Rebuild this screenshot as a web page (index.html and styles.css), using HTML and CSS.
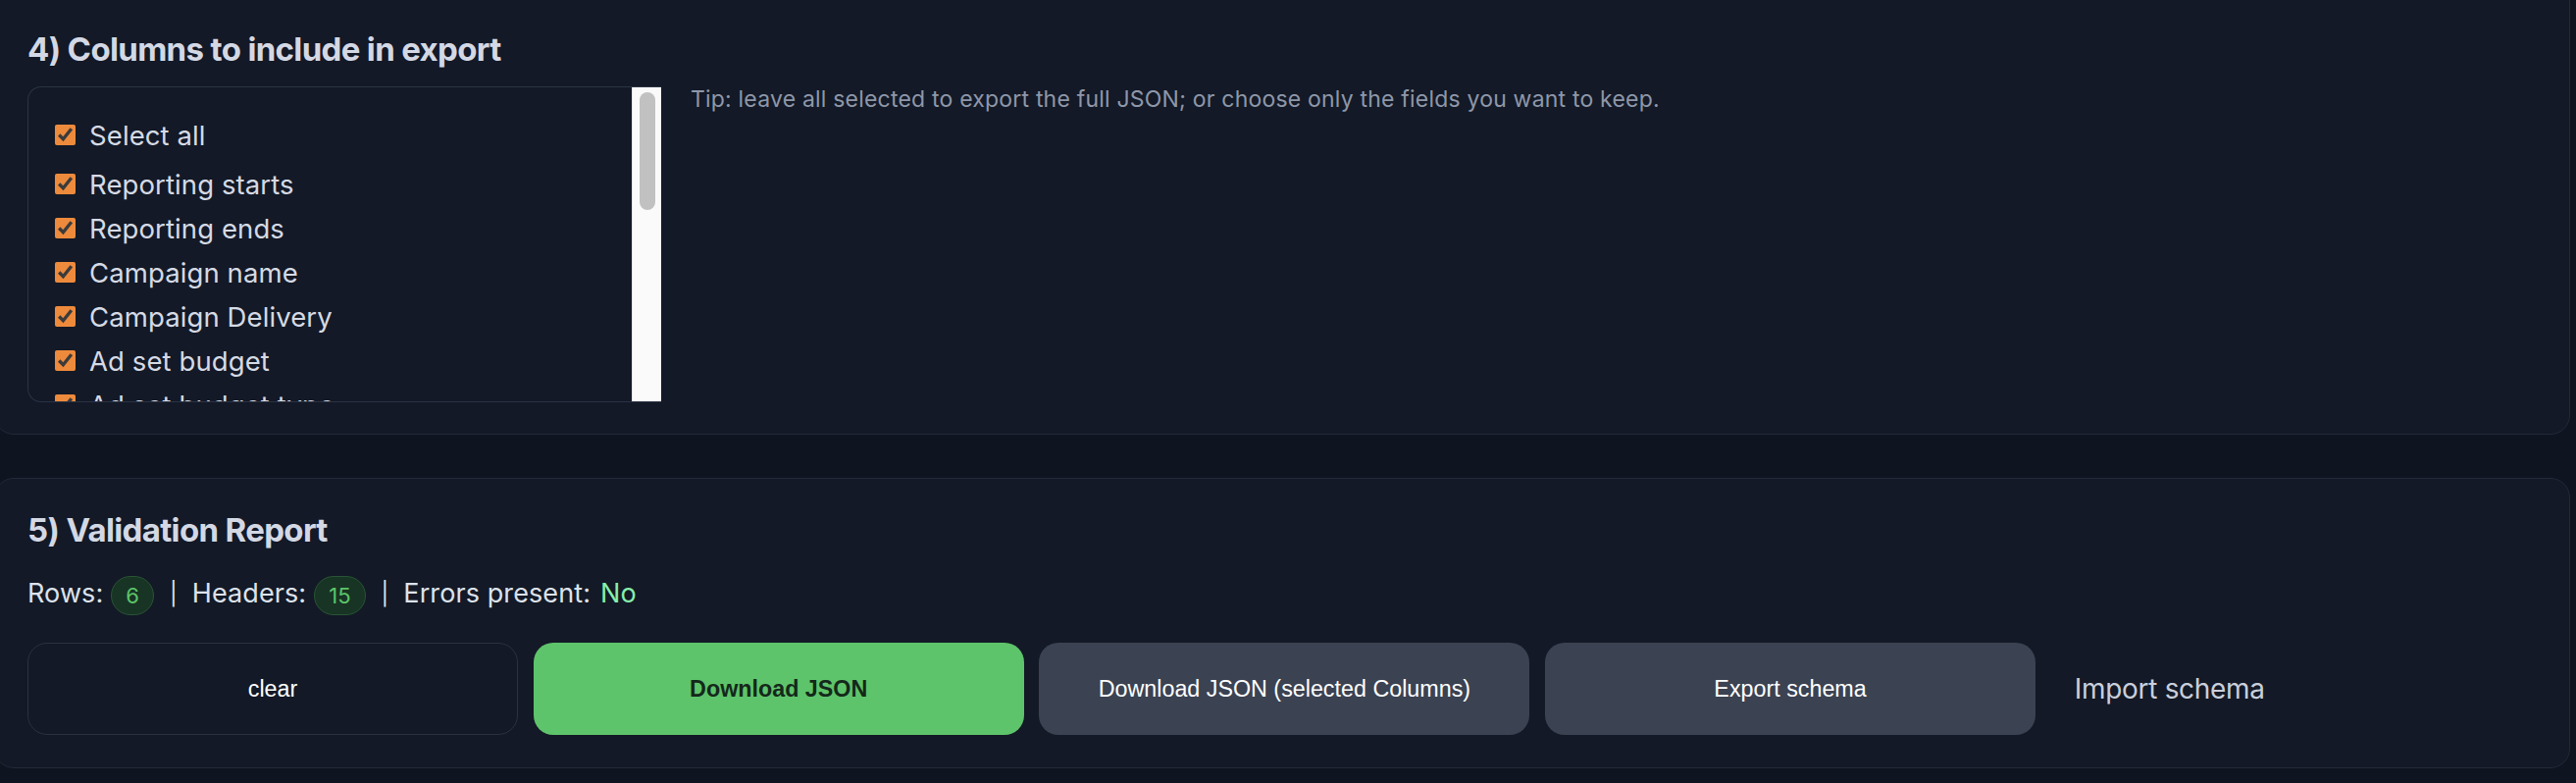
FILE: index.html
```html
<!DOCTYPE html>
<html lang="en">
<head>
<meta charset="utf-8">
<title>Export</title>
<link rel="stylesheet" href="styles.css">
</head>
<body>
<section class="card card-columns">
  <h2 class="card-title">4) Columns to include in export</h2>
  <div class="columns-row">
    <div class="list-box">
      <div class="column-list">
        <label class="col-item col-all"><input type="checkbox" checked><span>Select all</span></label>
        <label class="col-item"><input type="checkbox" checked><span>Reporting starts</span></label>
        <label class="col-item"><input type="checkbox" checked><span>Reporting ends</span></label>
        <label class="col-item"><input type="checkbox" checked><span>Campaign name</span></label>
        <label class="col-item"><input type="checkbox" checked><span>Campaign Delivery</span></label>
        <label class="col-item"><input type="checkbox" checked><span>Ad set budget</span></label>
        <label class="col-item"><input type="checkbox" checked><span>Ad set budget type</span></label>
        <label class="col-item"><input type="checkbox" checked><span>Amount spent (USD)</span></label>
        <label class="col-item"><input type="checkbox" checked><span>Attribution setting</span></label>
        <label class="col-item"><input type="checkbox" checked><span>Results</span></label>
        <label class="col-item"><input type="checkbox" checked><span>Result indicator</span></label>
        <label class="col-item"><input type="checkbox" checked><span>Reach</span></label>
        <label class="col-item"><input type="checkbox" checked><span>Impressions</span></label>
        <label class="col-item"><input type="checkbox" checked><span>Cost per results</span></label>
        <label class="col-item"><input type="checkbox" checked><span>Ends</span></label>
      </div>
      <div class="scrollbar"><div class="scroll-thumb"></div></div>
    </div>
    <p class="tip">Tip: leave all selected to export the full JSON; or choose only the fields you want to keep.</p>
  </div>
</section>

<section class="card card-report">
  <h2 class="card-title">5) Validation Report</h2>
  <div class="stats">
    <span>Rows:</span><span class="badge">6</span><span class="sep">|</span><span>Headers:</span><span class="badge">15</span><span class="sep">|</span><span>Errors present:</span><span class="ok">No</span>
  </div>
  <div class="actions">
    <button class="btn btn-outline">clear</button>
    <button class="btn btn-green">Download JSON</button>
    <button class="btn btn-gray">Download JSON (selected Columns)</button>
    <button class="btn btn-gray">Export schema</button>
    <label class="import-label">Import schema</label>
  </div>
</section>
</body>
</html>
```
FILE: styles.css
```css
html, body {
  margin: 0;
  padding: 0;
}
body {
  background: #0f1421;
  font-family: Inter, "Noto Sans", sans-serif;
  color: #d3d8e4;
  overflow: hidden;
}
.card {
  box-sizing: border-box;
  width: 2626px;
  margin-left: -6px;
  background: #131926;
  border: 1px solid #222938;
  border-radius: 20px;
  padding-left: 33px;
}
.card-columns {
  margin-top: -30px;
  padding-top: 59px;
  padding-bottom: 33px;
  height: 473px;
}
.card-report {
  margin-top: 44px;
  padding-top: 32px;
  height: 296px;
}
.card-title {
  margin: 0;
  font-size: 33px;
  line-height: 40px;
  font-weight: 700;
  letter-spacing: -0.65px;
  color: #d3d8e4;
}
.columns-row {
  display: flex;
  align-items: flex-start;
  gap: 30px;
  margin-top: 18px;
}
.list-box {
  box-sizing: border-box;
  display: flex;
  width: 646px;
  height: 322px;
  border: 1px solid #2b3344;
  border-right: none;
  border-radius: 14px 0 0 14px;
  overflow: hidden;
}
.column-list {
  flex: 1 1 auto;
  overflow: hidden;
  padding: 26px 0 0 26px;
  display: flex;
  flex-direction: column;
}
.scrollbar {
  box-sizing: border-box;
  flex: 0 0 30px;
  margin-top: -1px;
  margin-bottom: -1px;
  background: #fafafa;
  border-left: 1px solid #e4e4e4;
  padding: 6px 6px 0 7px;
}
.scroll-thumb {
  height: 120px;
  border-radius: 8px;
  background: #c1c1c1;
}
.col-item {
  display: flex;
  align-items: center;
  gap: 14px;
  height: 45px;
  flex: 0 0 45px;
  font-size: 27.5px;
  color: #d5dae5;
  letter-spacing: 0.1px;
  white-space: nowrap;
}
.col-all {
  margin-bottom: 5px;
}
.col-item input {
  width: 21px;
  height: 21px;
  margin: 0 0 0 1px;
  accent-color: #ee8a3c;
  flex: 0 0 auto;
}
.tip {
  margin: -2px 0 0;
  font-size: 23px;
  line-height: 30px;
  color: #8e97a9;
  letter-spacing: 0.2px;
}
.stats {
  display: flex;
  align-items: center;
  height: 40px;
  margin-top: 24px;
  font-size: 27px;
  color: #dde2ec;
  letter-spacing: 0.1px;
}
.badge {
  display: inline-block;
  margin-left: 8px;
  padding: 0 14px;
  height: 38px;
  line-height: 38px;
  border-radius: 999px;
  background: #183424;
  border: 1px solid #285535;
  color: #5cc46a;
  font-size: 22px;
  letter-spacing: 0;
  position: relative;
  top: 3px;
}
.sep {
  margin: 0 15px 0 16px;
  font-size: 23px;
  position: relative;
  top: 1px;
}
.ok {
  margin-left: 10px;
  color: #86efac;
}
.actions {
  display: flex;
  align-items: center;
  gap: 15.7px;
  margin-top: 31px;
}
.btn {
  box-sizing: border-box;
  flex: 0 0 500px;
  height: 94px;
  border-radius: 20px;
  font-family: "Liberation Sans", Arial, sans-serif;
  font-size: 23.3px;
  color: #ffffff;
  border: 1px solid transparent;
  cursor: pointer;
}
.btn-outline {
  background: transparent;
  border-color: #2a3141;
}
.btn-green {
  background: #5ec46b;
  color: #14281a;
  font-weight: 700;
}
.btn-gray {
  background: #3b4252;
}
.import-label {
  margin-left: 24px;
  font-size: 28px;
  color: #c9cfdb;
  letter-spacing: -0.3px;
}
```
